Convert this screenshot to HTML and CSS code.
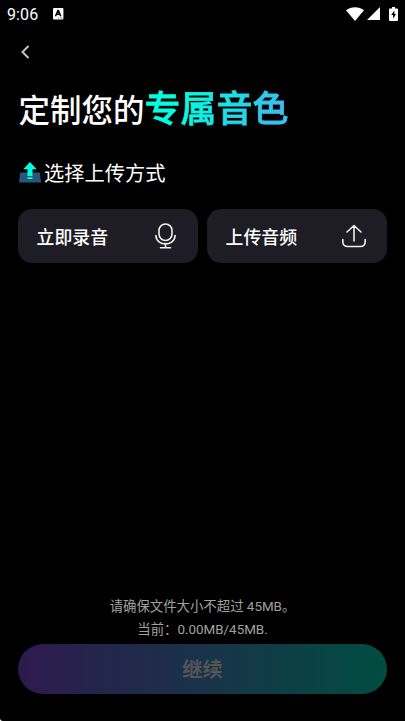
FILE: index.html
```html
<!DOCTYPE html>
<html lang="zh-CN">
<head>
<meta charset="utf-8">
<title>定制您的专属音色</title>
<link rel="stylesheet" href="styles.css">
</head>
<body>
<div class="screen">
  <div class="status">
    <span class="clock">9:06</span>
    <svg class="app-badge" width="11" height="12" viewBox="0 0 11 12"><rect width="10.4" height="11.5" rx="1" fill="#fff"/><path d="M2.5 8.2 4.9 2.6h.5l2.4 5.6M3.5 6.3h3.3" fill="none" stroke="#000" stroke-width="1.5"/><path d="M5 10h1M7 10h2.3" stroke="#777" stroke-width="1"/></svg>
    <span class="signals">
      <svg width="18" height="14" viewBox="0 0 18 14"><path d="M0 3.2C5-.8 13-.8 18 3.2L9 14Z" fill="#fff"/></svg>
      <svg width="13" height="13" viewBox="0 0 13 13"><path d="M13 0V13H0Z" fill="#fff"/></svg>
      <svg class="battery" width="9" height="14" viewBox="0 0 9 14"><path d="M3 0h3v1.4h2q1 0 1 1V13q0 1-1 1H1q-1 0-1-1V2.400q0-1 1-1h2Z" fill="#fff"/><path d="M5.400 3.500 2.200 8h1.900v3.700L7 7.100H5.400Z" fill="#000"/></svg>
    </span>
  </div>
  <div class="nav"><svg width="9" height="14" viewBox="0 0 9 14"><path d="M7.500 1 1.500 7l6 6" fill="none" stroke="#c4c4c4" stroke-width="2"/></svg></div>
  <h1 class="title">定制您的<span class="accent">专属音色</span></h1>
  <h2 class="subtitle">
    <svg width="22" height="21" viewBox="0 0 22 21"><path d="M1.200 10.500h19.600L22 20.500H0Z" fill="#24587a"/><path d="M11 0 17.700 7.300h-4.200V14H8.500V7.300H4.300ZM8.500 15.300h5V17h-5Z" fill="#00ffe0"/></svg>
    <span>选择上传方式</span>
  </h2>
  <div class="cards">
    <div class="card"><span>立即录音</span><svg width="21" height="26" viewBox="0 0 21 26" fill="none" stroke="#eee" stroke-width="1.600" stroke-linecap="round"><rect x="4" y="1" width="13" height="16.500" rx="6.500"/><path d="M.9 12.500C1.400 23.700 19.600 23.700 20.100 12.500M10.500 21v3.500M5.500 24.700h10"/></svg></div>
    <div class="card upload"><span>上传音频</span><svg width="26" height="26" viewBox="0 0 26 26" fill="none" stroke="#eee" stroke-width="1.600" stroke-linecap="round" stroke-linejoin="round"><path d="M13 18V2.500M6 9l7-6.500L20 9M1.800 16.500V18.500q0 5 5 5h12.400q5 0 5-5v-2"/></svg></div>
  </div>
  <div class="footer">
    <p class="hint">请确保文件大小不超过 45MB。<br>当前：0.00MB/45MB.</p>
    <button class="continue" disabled>继续</button>
  </div>
  <svg class="corner" width="3" height="3" viewBox="0 0 3 3"><path d="M0 0Q0 3 3 3H0Z" fill="#fff"/></svg>
</div>
</body>
</html>
```
FILE: styles.css
```css
* { box-sizing: border-box; }
body {
  margin: 0;
  background: #000;
  color: #fff;
  font-family: Roboto, "Noto Sans CJK SC", sans-serif;
}
.screen {
  position: relative;
  display: flex;
  flex-direction: column;
  height: 721px;
  padding: 0 18px;
  overflow: hidden;
}
.status {
  display: flex;
  align-items: center;
  height: 27px;
  margin: 0 -11px;
}
.clock { width: 46px; padding-top: 1px; font-size: 16px; letter-spacing: .1px; }
.signals {
  display: flex;
  align-items: center;
  gap: 3px;
  margin-left: auto;
}
.battery { margin-left: 6px; }
.nav { height: 48px; padding: 18px 0 0 3px; }
.nav svg { display: block; }
.title {
  height: 70px;
  margin: 0;
  padding-left: .5px;
  font-size: 31.500px;
  font-weight: 500;
  line-height: 70px;
  white-space: nowrap;
}
.accent {
  font-size: 36px;
  background: linear-gradient(115deg, #00ffe0 25%, #38c0ee 85%);
  -webkit-background-clip: text;
  background-clip: text;
  color: transparent;
  -webkit-text-stroke: .8px transparent;
}
.subtitle {
  display: flex;
  align-items: center;
  gap: 3px;
  height: 55px;
  margin: 0;
  padding-left: 1px;
  font-size: 20.250px;
  font-weight: 400;
}
.subtitle svg { margin-top: -1px; }
.cards {
  display: grid;
  grid-template-columns: 1fr 1fr;
  gap: 9px;
  margin-top: 9px;
}
.card {
  display: flex;
  align-items: center;
  justify-content: space-between;
  height: 54px;
  padding: 0 22px 0 18.500px;
  border-radius: 14px;
  background: #1e1c24;
  font-size: 17.900px;
  font-weight: 500;
}
.upload { padding-right: 20px; }
.footer { margin-top: auto; padding-bottom: 27px; text-align: center; }
.hint {
  margin: 0 0 3px;
  color: #a0a0a0;
  font-size: 13.400px;
  line-height: 22.500px;
}
.continue {
  display: block;
  width: 100%;
  height: 50px;
  padding: 2px 0 0;
  border: 0;
  border-radius: 25px;
  background: linear-gradient(90deg, #2e1a4e, #1b304a 45%, #004d40);
  color: #555;
  font: 700 20.250px/48px Roboto, "Noto Sans CJK SC", sans-serif;
}
.corner { position: absolute; left: 0; bottom: 0; }
```
